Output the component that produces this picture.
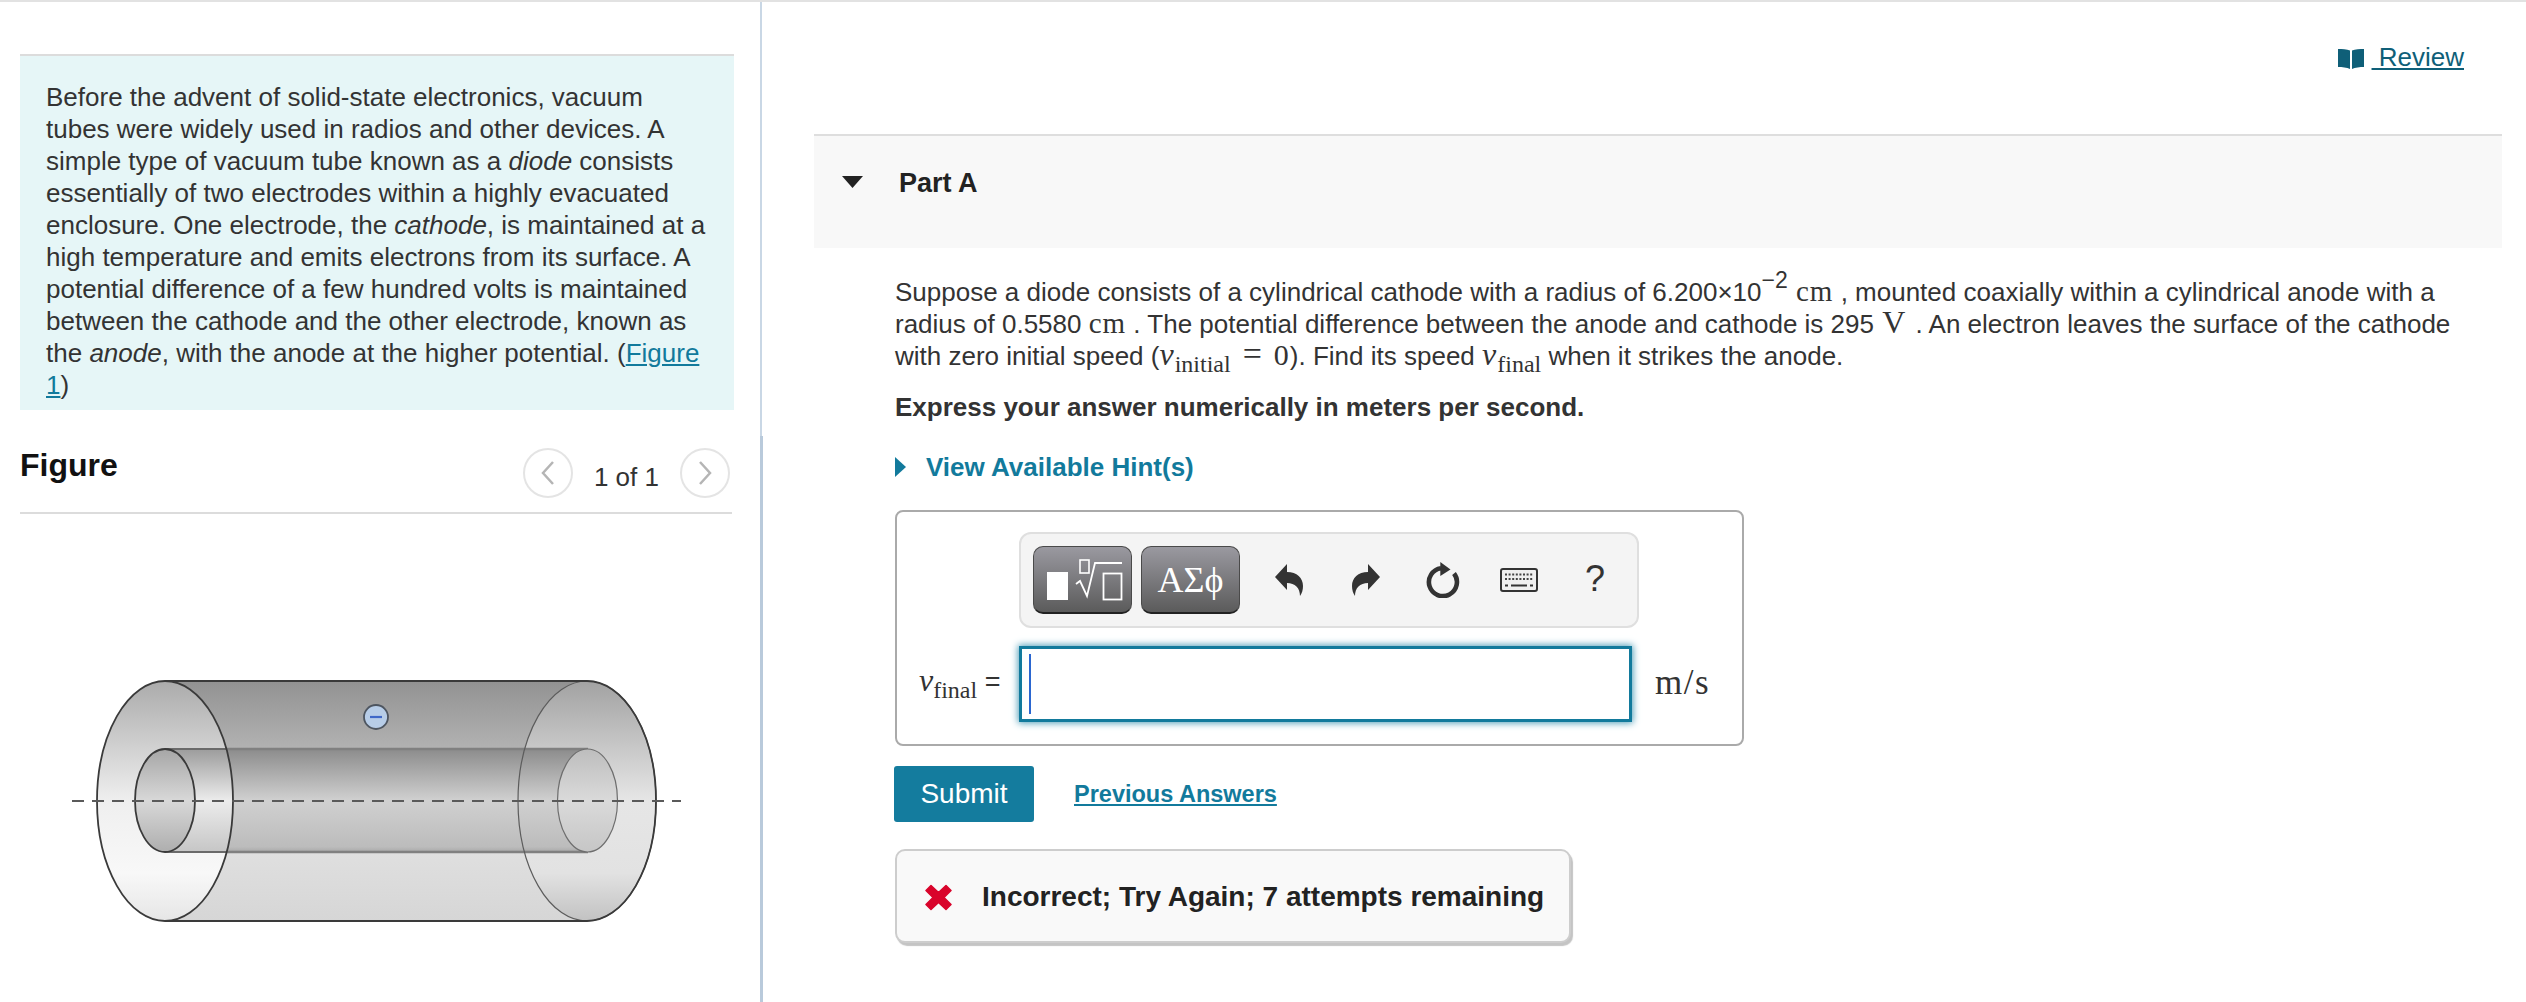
<div class="page">
  <aside class="left">
    <section class="intro-wrap">
      <div class="intro">
        Before the advent of solid-state electronics, vacuum<br />tubes were widely used in radios and other devices. A<br />simple type of vacuum tube known as a <i>diode</i> consists<br />essentially of two electrodes within a highly evacuated<br />enclosure. One electrode, the <i>cathode</i>, is maintained at a<br />high temperature and emits electrons from its surface. A<br />potential difference of a few hundred volts is maintained<br />between the cathode and the other electrode, known as<br />the <i>anode</i>, with the anode at the higher potential. (<a href="#f">Figure<br />1</a>)
      </div>
    </section>
    <section class="figure">
      <header class="fig-head">
        <h2>Figure</h2>
        <div class="pager">
          <span class="circle"><svg width="16" height="28" viewBox="0 0 16 28"><path d="M13 3 L3 14 L13 25" fill="none" stroke="#b5b5b5" stroke-width="2.5" /></svg></span>
          <span class="count">1 of 1</span>
          <span class="circle"><svg width="16" height="28" viewBox="0 0 16 28"><path d="M3 3 L13 14 L3 25" fill="none" stroke="#b5b5b5" stroke-width="2.5" /></svg></span>
        </div>
      </header>
      <svg class="diagram" width="712" height="486" viewBox="20 514 712 486">
        <defs>
          <clipPath id="faceClip"><ellipse cx="165" cy="801" rx="68" ry="120" /></clipPath>
          <linearGradient id="body" x1="0" y1="0" x2="0" y2="1">
            <stop offset="0" stop-color="#929292" />
            <stop offset="0.3" stop-color="#b4b4b4" />
            <stop offset="0.72" stop-color="#dfdfdf" />
            <stop offset="1" stop-color="#d6d6d6" />
          </linearGradient>
          <linearGradient id="face" x1="0" y1="0" x2="0" y2="1">
            <stop offset="0" stop-color="#ababab" />
            <stop offset="0.5" stop-color="#efefef" />
            <stop offset="0.8" stop-color="#f8f8f8" />
            <stop offset="1" stop-color="#e6e6e6" />
          </linearGradient>
          <linearGradient id="cap" x1="0" y1="0" x2="0" y2="1">
            <stop offset="0" stop-color="#a2a2a2" />
            <stop offset="0.5" stop-color="#e6e6e6" />
            <stop offset="0.8" stop-color="#e2e2e2" />
            <stop offset="1" stop-color="#c2c2c2" />
          </linearGradient>
          <linearGradient id="tube" x1="0" y1="0" x2="0" y2="1">
            <stop offset="0" stop-color="#8c8c8c" />
            <stop offset="0.5" stop-color="#d0d0d0" />
            <stop offset="0.95" stop-color="#bcbcbc" />
            <stop offset="1" stop-color="#a8a8a8" />
          </linearGradient>
          <linearGradient id="tubeFront" x1="0" y1="0" x2="0" y2="1">
            <stop offset="0" stop-color="#9c9c9c" />
            <stop offset="0.5" stop-color="#ececec" />
            <stop offset="1" stop-color="#c6c6c6" />
          </linearGradient>
          <linearGradient id="hole" x1="0" y1="0" x2="0" y2="1">
            <stop offset="0" stop-color="#a6a6a6" />
            <stop offset="0.5" stop-color="#d8d8d8" />
            <stop offset="1" stop-color="#aeaeae" />
          </linearGradient>
          <linearGradient id="holeRight" x1="0" y1="0" x2="0" y2="1">
            <stop offset="0" stop-color="#bdbdbd" />
            <stop offset="0.5" stop-color="#dadada" />
            <stop offset="1" stop-color="#c6c6c6" />
          </linearGradient>
        </defs>
        <rect x="165" y="681" width="422" height="240" fill="url(#body)" />
        <ellipse cx="587" cy="801" rx="69" ry="120" fill="url(#cap)" />
        <rect x="165" y="749" width="422" height="103" fill="url(#tube)" />
        <path d="M165 749 H588 M165 852 H588" stroke="#808080" stroke-width="2.5" fill="none" />
        <ellipse cx="587.5" cy="800.5" rx="30" ry="51.5" fill="url(#holeRight)" stroke="#6e6e6e" stroke-width="1.2" />
        <ellipse cx="587" cy="801" rx="69" ry="120" fill="none" stroke="#5c5c5c" stroke-width="1.2" />
        <ellipse cx="165" cy="801" rx="68" ry="120" fill="url(#face)" />
        <g clip-path="url(#faceClip)">
          <rect x="165" y="749" width="80" height="103" fill="url(#tubeFront)" />
          <path d="M165 749 H240 M165 852 H240" stroke="#6a6a6a" stroke-width="2" fill="none" />
        </g>
        <ellipse cx="165" cy="801" rx="68" ry="120" fill="none" stroke="#3a3a3a" stroke-width="1.8" />
        <path d="M165 681 H587 M165 921 H587" stroke="#3a3a3a" stroke-width="2.2" fill="none" />
        <path d="M587 681 A69 120 0 0 1 587 921" fill="none" stroke="#3a3a3a" stroke-width="1.8" />
        <ellipse cx="165" cy="800.5" rx="30" ry="51.5" fill="url(#hole)" stroke="#3a3a3a" stroke-width="1.8" />
        <path d="M72 801 H681" stroke="#5a5a5a" stroke-width="2.2" stroke-dasharray="12 8" fill="none" />
        <circle cx="376" cy="717" r="12" fill="#b7cde8" stroke="#4d5560" stroke-width="1.8" />
        <path d="M370 717 H382" stroke="#3f68c8" stroke-width="2.2" />
      </svg>
    </section>
  </aside>

  <main class="right">
    <div class="review-row">
      <a class="review" href="#r">
        <svg width="26" height="20" viewBox="0 0 26 20"><path d="M0 0 C4 0 9 0 12 1.5 V20 C9 18.5 4 18 0 18 Z M14 1.5 C17 0 22 0 26 0 V18 C22 18 17 18.5 14 20 Z" fill="#0f5f78" /></svg><span class="review-text">&nbsp;Review</span>
      </a>
    </div>

    <div class="part-head">
      <svg class="caret-down" width="21" height="12" viewBox="0 0 21 12"><path d="M0 0 H21 L10.5 12 Z" fill="#222" /></svg>
      <h3>Part A</h3>
    </div>

    <div class="part-body">
      <p class="q">Suppose a diode consists of a cylindrical cathode with a radius of 6.200×10<sup>−2</sup> <span class="m unit">cm</span> , mounted coaxially within a cylindrical anode with a<br />radius of 0.5580 <span class="m unit">cm</span> . The potential difference between the anode and cathode is 295 <span class="m unit v">V</span> . An electron leaves the surface of the cathode<br />with zero initial speed (<span class="m"><i>v</i><sub>initial</sub><span class="eq">=</span><span class="zero">0</span></span>). Find its speed <span class="m"><i>v</i><sub>final</sub></span> when it strikes the anode.</p>
      <p class="express">Express your answer numerically in meters per second.</p>
      <div class="hint">
        <svg width="11" height="20" viewBox="0 0 11 20"><path d="M0 0 L11 10 L0 20 Z" fill="#127a9c" /></svg>
        <span>View Available Hint(s)</span>
      </div>

      <div class="answer">
        <div class="toolbar">
          <button class="tool" aria-label="Templates">
            <svg width="98" height="68" viewBox="1033 546 98 68">
              <rect x="1047" y="572" width="21" height="28" fill="#fff" />
              <rect x="1080" y="560" width="9" height="13" fill="none" stroke="#fff" stroke-width="1.6" />
              <path d="M1076 584 L1080 581 L1087 596 L1095 563 H1122" fill="none" stroke="#fff" stroke-width="1.8" />
              <rect x="1103.5" y="573.5" width="18" height="26" fill="none" stroke="#fff" stroke-width="1.8" />
            </svg>
          </button>
          <button class="tool greek">ΑΣϕ</button>
          <svg class="ico undo" width="28" height="32" viewBox="0 0 28 32"><path d="M0 13 L12 0 V8 C22 8 28 14 28 22 C28 26 27 29 25 32 C25 24 20 19 12 19 V26 Z" fill="#333" /></svg>
          <svg class="ico redo" width="28" height="32" viewBox="0 0 28 32"><path d="M28 13 L16 0 V8 C6 8 0 14 0 22 C0 26 1 29 3 32 C3 24 8 19 16 19 V26 Z" fill="#333" /></svg>
          <svg class="ico refresh" width="36" height="36" viewBox="0 0 36 36">
            <path d="M16 6.2 A14 14 0 1 0 29 11.5" fill="none" stroke="#333" stroke-width="4.6" />
            <path d="M15.3 0 L25.5 7.5 L15.3 14 Z" fill="#333" />
          </svg>
          <svg class="ico keyboard" width="38" height="24" viewBox="0 0 38 24">
            <rect x="1" y="1" width="36" height="22" rx="2" fill="#efefef" stroke="#333" stroke-width="2" />
            <path d="M5 6.5 H33 M5 11 H33" stroke="#444" stroke-width="2" stroke-dasharray="2 1.6" />
            <path d="M5 17.5 H8 M11 17.5 H27 M30 17.5 H33" stroke="#333" stroke-width="2.2" />
          </svg>
          <span class="help">?</span>
        </div>
        <div class="entry">
          <span class="label"><i>v</i><sub>final</sub> <b>=</b></span>
          <div class="input"><span class="cursor"></span></div>
          <span class="units">m/s</span>
        </div>
      </div>

      <div class="actions">
        <button class="submit">Submit</button>
        <a class="prev" href="#p">Previous Answers</a>
      </div>

      <div class="feedback">
        <svg width="27" height="27" viewBox="0 0 27 27"><path d="M6 1.5 L13.5 8.5 L21 1.5 L26 6.5 L19 13.5 L26 20.5 L21 25.5 L13.5 18.5 L6 25.5 L1 20.5 L8 13.5 L1 6.5 Z" fill="#d9042b" stroke="#d9042b" stroke-width="1.5" stroke-linejoin="round" /></svg>
        <span>Incorrect; Try Again; 7 attempts remaining</span>
      </div>
    </div>
  </main>
</div>

<style>
  :global(html), :global(body) { margin: 0; background: #fff; }
  :global(body) { overflow: hidden; }
  * { box-sizing: border-box; }
  .page {
    display: flex;
    width: 2526px;
    height: 1002px;
    border-top: 2px solid #e2e2e2;
    font-family: "Liberation Sans", Arial, sans-serif;
    font-size: 26px;
    line-height: 32px;
    color: #333;
    overflow: hidden;
  }
  .left { width: 763px; flex: none; display: flex; flex-direction: column; }
  .intro-wrap { height: 434px; padding: 52px 0 0 20px; border-right: 2px solid #c9d7e5; margin-right: 1px; }
  .intro {
    width: 714px;
    height: 356px;
    background: #e6f6f7;
    border-top: 2px solid #dcdcdc;
    padding: 25px 0 0 26px;
    white-space: nowrap;
  }
  a { color: #127a9c; }
  .figure { flex: 1; padding: 12px 0 0 20px; border-right: 3px solid #b9cadb; }
  .fig-head {
    width: 712px;
    height: 66px;
    border-bottom: 2px solid #dcdcdc;
    display: flex;
    justify-content: space-between;
    align-items: flex-start;
  }
  h2 { margin: 1px 0 0; font-size: 32px; line-height: 32px; color: #111; font-weight: 700; }
  .pager { display: flex; align-items: flex-start; gap: 21px; padding-right: 2px; }
  .count { margin-top: 13px; }
  .circle {
    width: 50px;
    height: 50px;
    border: 2px solid #e4e4e4;
    border-radius: 50%;
    display: flex;
    align-items: center;
    justify-content: center;
  }
  .diagram { display: block; }
  .right { flex: 1; min-width: 0; }
  .review-row { height: 132px; padding: 39px 62px 0 0; text-align: right; }
  .review { color: #0f5f78; text-decoration: none; white-space: nowrap; }
  .review svg { vertical-align: -3px; }
  .review-text { text-decoration: underline; margin-left: 8px; }
  .part-head {
    margin: 0 24px 0 51px;
    height: 114px;
    background: #f8f8f8;
    border-top: 2px solid #dedede;
    display: flex;
    align-items: flex-start;
  }
  .caret-down { margin: 40px 0 0 28px; }
  h3 { margin: 31px 0 0 36px; font-size: 27px; line-height: 32px; color: #222; font-weight: 700; }
  .part-body { padding: 28px 0 0 132px; }
  p { margin: 0; white-space: nowrap; }
  .m { font-family: "Liberation Serif", serif; line-height: 0; font-size: 30px; }
  .m i { font-size: 32px; margin-right: 1px; }
  .unit { font-size: 29px; letter-spacing: 1px; }
  .v { font-size: 32px; margin: 0 2px 0 1px; }
  sup, sub { line-height: 0; }
  sup { font-size: 23px; margin-right: 1px; position: relative; top: -3px; }
  .m sub { font-size: 24px; }
  .eq { margin: 0 12px; font-size: 34px; }
  .zero { margin-right: 1px; }
  .express { margin-top: 19px; font-weight: 700; }
  .hint {
    margin-top: 28px;
    height: 32px;
    display: flex;
    align-items: center;
    gap: 20px;
    color: #127a9c;
    font-weight: 700;
  }
  .answer {
    margin-top: 27px;
    width: 849px;
    height: 236px;
    border: 2px solid #aaa;
    border-radius: 8px;
    padding: 20px 0 0 122px;
  }
  .toolbar {
    width: 620px;
    height: 96px;
    background: #f4f4f4;
    border: 2px solid #dfdfdf;
    border-radius: 12px;
    display: flex;
    align-items: center;
    padding-left: 12px;
  }
  .tool {
    width: 99px;
    height: 68px;
    padding: 0;
    border: 1px solid #4a4a4a;
    border-bottom: 2px solid #222;
    border-radius: 10px;
    background: linear-gradient(#9a99a0, #5b5b5b);
    color: #fff;
    display: block;
    margin-right: 9px;
  }
  .tool svg { display: block; margin: -1px; }
  .greek { font-family: "Liberation Serif", serif; font-size: 36px; line-height: 60px; }
  .ico { flex: none; }
  .undo { margin-left: 26px; }
  .redo { margin-left: 49px; }
  .refresh { margin-left: 45px; }
  .keyboard { margin-left: 39px; }
  .help { margin-left: 47px; font-size: 36px; color: #333; line-height: 36px; margin-top: -3px; }
  .entry { display: flex; align-items: flex-start; margin-top: 18px; margin-left: -122px; }
  .label {
    width: 122px;
    padding: 18px 0 0 22px;
    font-family: "Liberation Serif", serif;
    font-size: 30px;
    white-space: nowrap;
    line-height: 32px;
  }
  .label i { font-size: 32px; }
  .label sub { font-size: 24px; }
  .label b { font-family: "Liberation Sans", sans-serif; font-weight: 400; font-size: 27px; margin-left: 0; }
  .input {
    width: 613px;
    height: 76px;
    border: 3px solid #127a9c;
    box-shadow: 0 0 7px 1px #4d9db8;
    padding: 5px 0 0 7px;
    background: #fff;
  }
  .cursor { display: block; width: 2px; height: 60px; background: #2a66d0; }
  .units {
    margin: 19px 0 0 23px;
    font-family: "Liberation Serif", serif;
    font-size: 35px;
    line-height: 36px;
    letter-spacing: 1.5px;
  }
  .actions { margin-top: 20px; margin-left: -1px; display: flex; align-items: center; gap: 40px; }
  .submit {
    width: 140px;
    height: 56px;
    background: #147c9e;
    color: #fff;
    border: 0;
    border-radius: 3px;
    font: 28px "Liberation Sans", sans-serif;
    padding: 0;
  }
  .prev { font-size: 23.5px; font-weight: 700; }
  .feedback {
    margin-top: 27px;
    width: 676px;
    height: 94px;
    background: #f9f9f9;
    border: 2px solid #cdcdcd;
    border-radius: 10px;
    box-shadow: 2px 3px 1px #c4c4c4;
    display: flex;
    align-items: center;
    padding: 2px 0 0 28px;
    gap: 30px;
    color: #222;
    font-weight: 700;
    font-size: 28px;
  }
</style>
